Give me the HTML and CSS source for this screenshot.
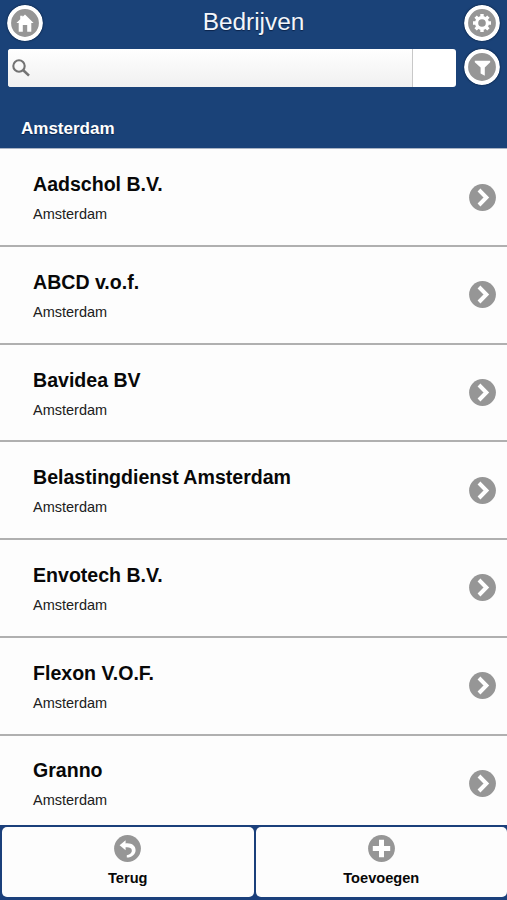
FILE: index.html
```html
<!DOCTYPE html>
<html lang="nl">
<head>
<meta charset="utf-8">
<title>Bedrijven</title>
<link rel="stylesheet" href="styles.css">
</head>
<body>
<svg class="defs" aria-hidden="true">
  <symbol id="chevron" viewBox="0 0 27 27"><circle cx="13.5" cy="13.5" r="13.4" fill="#969696"/><path d="M11.4 7.4 17.4 13.5 11.4 19.6" fill="none" stroke="#fff" stroke-width="4" stroke-linecap="square"/></symbol>
</svg>
<div class="app">
  <header class="header">
    <button class="round" aria-label="Home"><svg viewBox="0 0 36 36"><circle cx="18" cy="18" r="15.9" fill="#969696" stroke="#fff" stroke-width="4"/><path d="M18 9.4 26.6 18H24.3V26.7H20.2V20H15.8V26.7H11.7V18H9.4L13.2 14.2V10.8H15.6V11.8Z" fill="#fff"/></svg></button>
    <h1>Bedrijven</h1>
    <button class="round" aria-label="Instellingen"><svg viewBox="0 0 36 36"><circle cx="18" cy="18" r="15.9" fill="#969696" stroke="#fff" stroke-width="4"/><circle cx="18" cy="18" r="5.4" fill="none" stroke="#fff" stroke-width="3.2"/><path d="M18 9v3M18 24v3M9 18h3M24 18h3M11.6 11.6l2.1 2.1M22.3 22.3l2.1 2.1M11.6 24.4l2.1-2.1M22.3 13.7l2.1-2.1" stroke="#fff" stroke-width="3.4"/></svg></button>
  </header>
  <div class="search-row">
    <div class="search">
      <div class="field"><svg viewBox="0 0 18 18"><circle cx="7" cy="7" r="5.7" fill="none" stroke="#737373" stroke-width="2.1"/><path d="M11 11 17 16.6" stroke="#737373" stroke-width="2.6"/></svg></div>
      <div class="clear"></div>
    </div>
    <button class="round" aria-label="Filter"><svg viewBox="0 0 36 36"><circle cx="18" cy="18" r="15.9" fill="#969696" stroke="#fff" stroke-width="4"/><path d="M10.8 11.8H26.2V13.2L20.8 18.6V26.8L16.6 24.4V18.6L10.8 13.2Z" fill="#fff"/></svg></button>
  </div>
  <h2 class="divider">Amsterdam</h2>
  <main class="list">
    <a class="row"><div><h3>Aadschol B.V.</h3><p>Amsterdam</p></div><svg><use href="#chevron"/></svg></a>
    <a class="row"><div><h3>ABCD v.o.f.</h3><p>Amsterdam</p></div><svg><use href="#chevron"/></svg></a>
    <a class="row"><div><h3>Bavidea BV</h3><p>Amsterdam</p></div><svg><use href="#chevron"/></svg></a>
    <a class="row"><div><h3>Belastingdienst Amsterdam</h3><p>Amsterdam</p></div><svg><use href="#chevron"/></svg></a>
    <a class="row"><div><h3>Envotech B.V.</h3><p>Amsterdam</p></div><svg><use href="#chevron"/></svg></a>
    <a class="row"><div><h3>Flexon V.O.F.</h3><p>Amsterdam</p></div><svg><use href="#chevron"/></svg></a>
    <a class="row"><div><h3>Granno</h3><p>Amsterdam</p></div><svg><use href="#chevron"/></svg></a>
  </main>
  <footer class="footer">
    <button class="action"><svg viewBox="0 0 27 27"><circle cx="13.5" cy="13.5" r="13.4" fill="#969696"/><path d="M5.6 10.2 11.6 5.2V8.4C17.8 7.8 21.6 10.8 21.6 15.2 21.6 19.4 18.2 22.2 12.8 22.6V20.3C16.4 19.3 18.2 17.6 17.8 15 17.4 12.7 15.3 11.9 11.6 12.2V15.2Z" fill="#fff"/></svg><span>Terug</span></button>
    <button class="action"><svg viewBox="0 0 27 27"><circle cx="13.5" cy="13.5" r="13.4" fill="#969696"/><path d="M13.5 4.8V22.2M4.8 13.5H22.2" stroke="#fff" stroke-width="5"/></svg><span>Toevoegen</span></button>
  </footer>
</div>
</body>
</html>
```
FILE: styles.css
```css
* { box-sizing: border-box; }
body { margin: 0; font-family: "Liberation Sans", Arial, sans-serif; background: #1a4278; }
h1, h2, h3, p { margin: 0; }
button { border: 0; padding: 0; font: inherit; background: none; }
.defs { display: block; width: 0; height: 0; }
.app { height: 900px; display: flex; flex-direction: column; overflow: hidden; }

.header { height: 45px; flex: none; display: flex; justify-content: space-between; padding: 5px 7px 0; }
.header h1 { font-size: 24.4px; font-weight: 400; line-height: 33px; color: #f3f6fb; text-shadow: 0 1px 1px #0b2349; }
.round { width: 36px; height: 36px; flex: none; }
.round svg { display: block; width: 36px; height: 36px; border-radius: 50%; box-shadow: 0 0 2px rgba(0, 0, 0, .6); }

.search-row { height: 63px; flex: none; display: flex; justify-content: space-between; padding: 4px 7px 0 8px; }
.search { width: 448px; height: 38px; display: flex; border-radius: 3px; overflow: hidden; background: #fff; }
.field { width: 405px; display: flex; align-items: center; padding-left: 4px; background: linear-gradient(#fff, #f0f0f0); border-right: 1px solid #c8c8c8; }
.field svg { width: 18px; height: 18px; }

.divider { height: 41px; flex: none; padding-left: 21px; font-size: 17px; line-height: 42px; color: #fff; border-bottom: 1px solid #a9b3c4; text-shadow: 0 1px 1px #0b2349; }

.list { flex: 1; min-height: 0; overflow: hidden; background: #fdfdfd; padding-top: .4px; }
.row { height: 97.7px; display: flex; align-items: center; justify-content: space-between; padding: 0 11px 0 33px; border-bottom: 2px solid #b0b0b0; }
.row > div { height: 94px; padding-top: 22px; }
.row h3 { font-size: 19.57px; line-height: 24px; color: #080808; }
.row p { margin-top: 9px; font-size: 14.5px; line-height: 18px; color: #202020; }
.row svg { width: 27px; height: 27px; }

.footer { height: 75px; flex: none; display: grid; grid-template-columns: 1fr 1fr; gap: 2px; padding: 2px 0 3px 2px; background: #1b407b; }
.action { display: flex; flex-direction: column; align-items: center; padding-top: 8px; border-radius: 5px; background: #fdfdfd; }
.action svg { width: 27px; height: 27px; }
.action span { margin-top: 6px; font-size: 14.6px; line-height: 20px; font-weight: 700; color: #080808; }
```
